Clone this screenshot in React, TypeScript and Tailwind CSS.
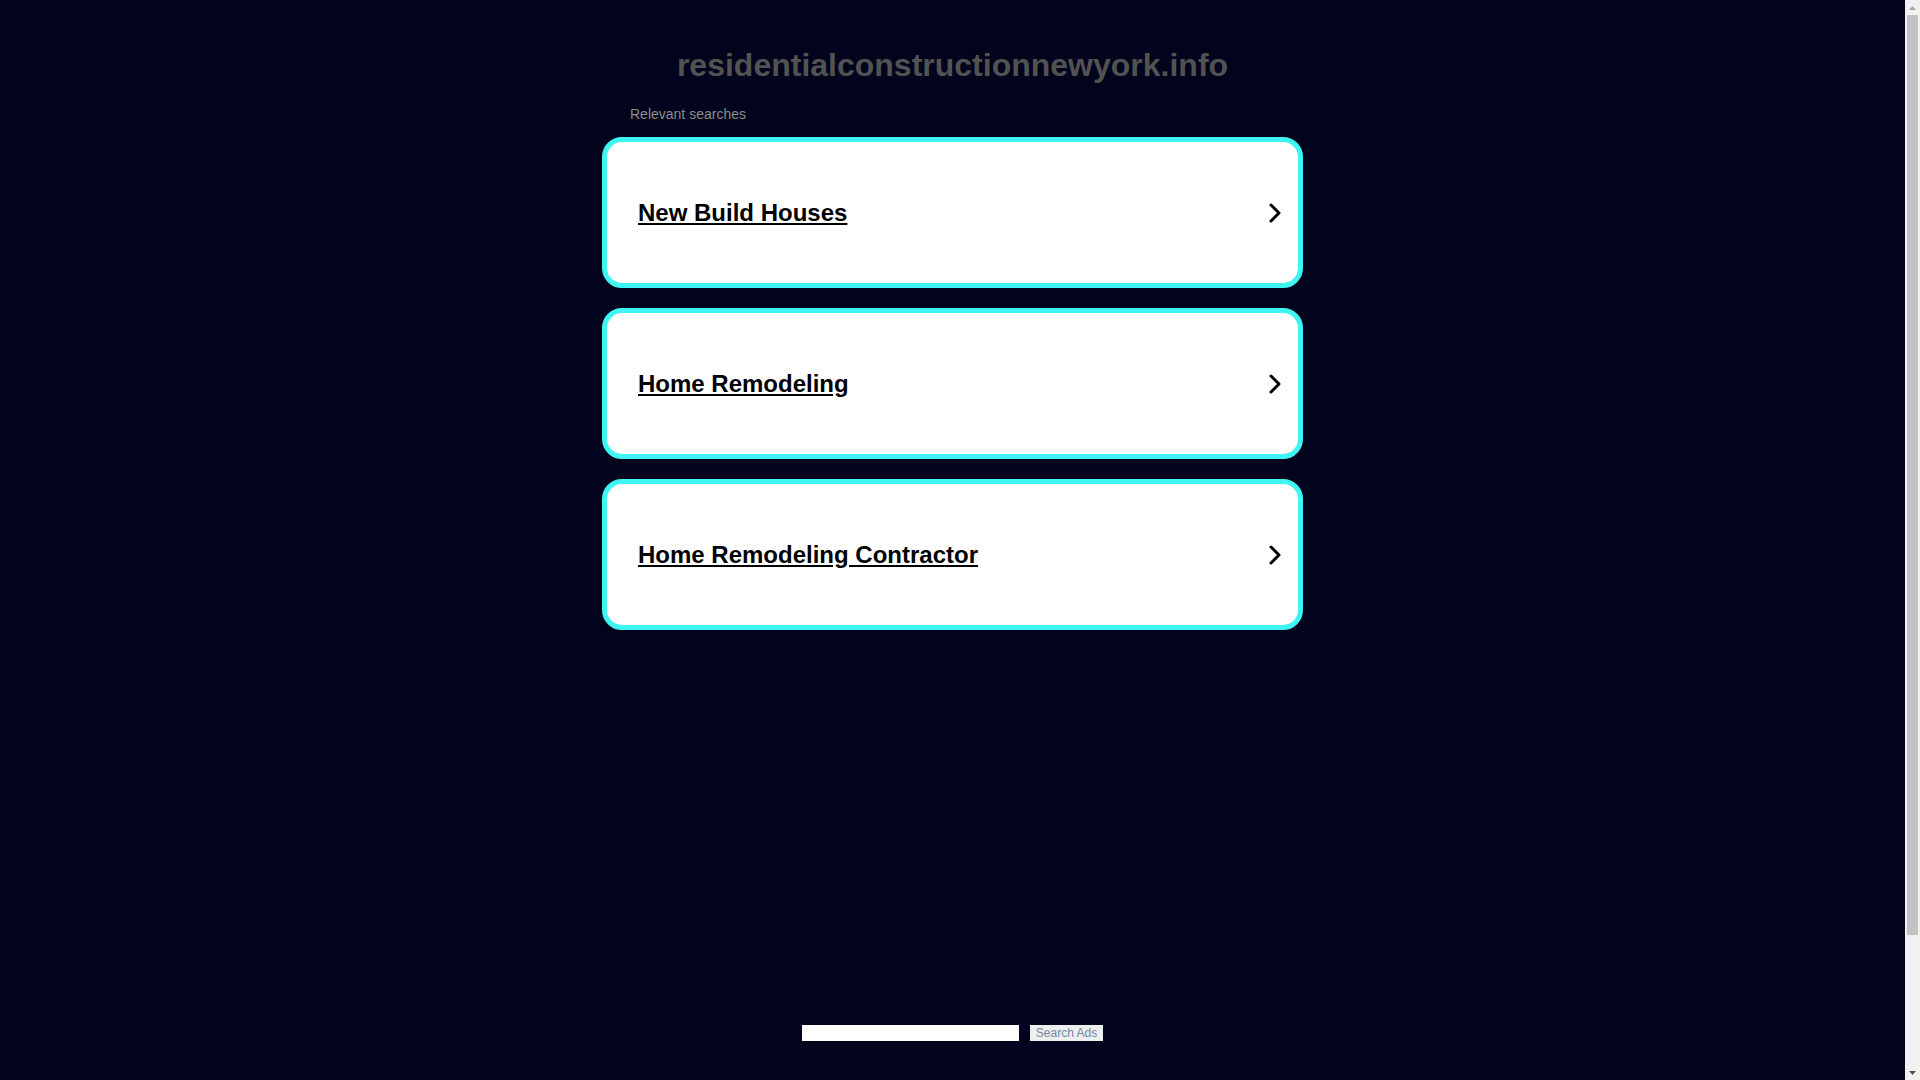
import React from 'react';

const searches = ['New Build Houses', 'Home Remodeling', 'Home Remodeling Contractor'];

const Chevron: React.FC = () => (
  <svg width="14" height="22" viewBox="0 0 14 22" fill="none" className="shrink-0">
    <polyline points="3,3 11,11 3,19" stroke="#000" strokeWidth="3" strokeLinecap="round" strokeLinejoin="round" />
  </svg>
);

// classic browser scrollbar as seen in the shot
const ScrollBar: React.FC = () => (
  <div className="w-[15px] h-full bg-[#f1f1f1] flex flex-col items-center shrink-0">
    <div className="h-[15px] flex items-center justify-center">
      <svg width="7" height="4" viewBox="0 0 7 4">
        <polygon points="0,4 3.5,0 7,4" fill="#a3a3a3" />
      </svg>
    </div>
    <div className="w-[11px] h-[920px] bg-[#c1c1c1]" />
    <div className="flex-1" />
    <div className="h-[15px] flex items-center justify-center">
      <svg width="7" height="4" viewBox="0 0 7 4">
        <polygon points="0,0 3.5,4 7,0" fill="#505050" />
      </svg>
    </div>
  </div>
);

const App: React.FC = () => {
  return (
    <div className="h-screen flex bg-[#01041c] font-['Liberation_Sans',Arial,sans-serif] overflow-hidden">
      <main className="flex-1 overflow-hidden">
        <div className="w-[701px] mx-auto pt-[47px]">
          <h1 className="text-center text-[32px] leading-[37px] font-bold text-[#525252]">
            residentialconstructionnewyork.info
          </h1>
          <p className="mt-[22px] pl-[28px] text-[14px] leading-[16px] text-[#8c8c8c]">Relevant searches</p>

          <div className="mt-[15px] flex flex-col gap-[20px]">
            {searches.map((s) => (
              <a
                key={s}
                href="#"
                className="h-[151px] flex items-center justify-between bg-white border-[5px] border-[#3ff5f3] rounded-[20px] pl-[31px] pr-[16px]"
              >
                <span className="text-[24px] leading-[28px] font-bold text-black underline">{s}</span>
                <Chevron />
              </a>
            ))}
          </div>

          <div className="mt-[395px] flex justify-center items-center gap-[11px]">
            <input type="text" className="w-[217px] h-[16px] bg-white border-0 outline-none p-0" />
            <button className="w-[73px] h-[16px] bg-[#efefef] text-[#7088a2] text-[12px] leading-[16px] p-0">
              Search Ads
            </button>
          </div>
        </div>
      </main>
      <ScrollBar />
    </div>
  );
};

export default App;
